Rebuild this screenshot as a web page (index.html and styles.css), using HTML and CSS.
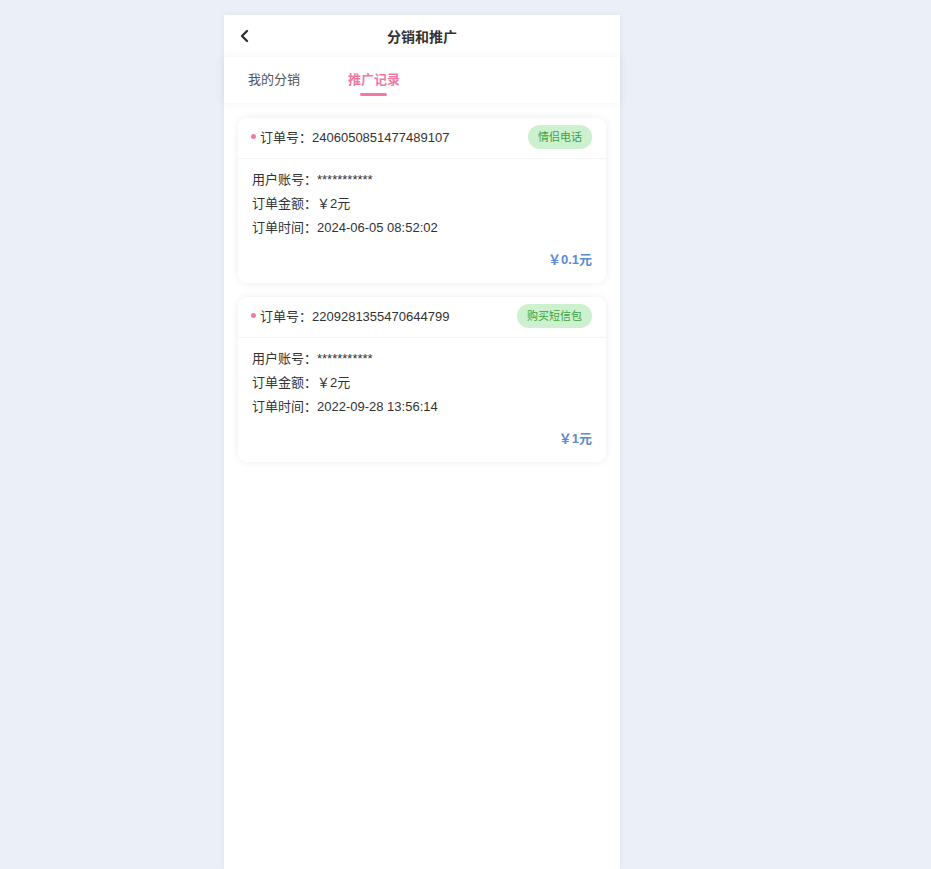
FILE: index.html
```html
<!DOCTYPE html>
<html lang="zh-CN">
<head>
    <meta charset="UTF-8">
    <meta name="viewport" content="width=device-width, initial-scale=1.0">
    <title>分销和推广</title>
    <link rel="stylesheet" href="styles.css">
</head>
<body>
    <div class="phone">
        <header class="topbar">
            <span class="back">
                <svg width="12" height="14" viewBox="0 0 12 14"><path d="M8 2 L3 7 L8 12" fill="none" stroke="#333" stroke-width="2.4" stroke-linecap="round" stroke-linejoin="round"/></svg>
            </span>
            <h1>分销和推广</h1>
        </header>

        <nav class="tabs">
            <div class="tab">我的分销</div>
            <div class="tab active">推广记录</div>
        </nav>

        <main class="list">
            <!-- 订单 1 -->
            <div class="card">
                <div class="card-head">
                    <span class="dot"></span>
                    <span class="order-no">订单号：2406050851477489107</span>
                    <span class="badge">情侣电话</span>
                </div>
                <div class="card-body">
                    <p>用户账号：***********</p>
                    <p>订单金额：￥2元</p>
                    <p>订单时间：2024-06-05 08:52:02</p>
                    <div class="reward">￥0.1元</div>
                </div>
            </div>

            <!-- 订单 2 -->
            <div class="card">
                <div class="card-head">
                    <span class="dot"></span>
                    <span class="order-no">订单号：2209281355470644799</span>
                    <span class="badge">购买短信包</span>
                </div>
                <div class="card-body">
                    <p>用户账号：***********</p>
                    <p>订单金额：￥2元</p>
                    <p>订单时间：2022-09-28 13:56:14</p>
                    <div class="reward">￥1元</div>
                </div>
            </div>
        </main>
    </div>
</body>
</html>
```

FILE: styles.css
```css
body {
    margin: 0;
    padding: 0;
    background-color: #eaeff8;
    font-family: "Liberation Sans", "Noto Sans CJK SC", sans-serif;
    color: #333;
}
.phone {
    width: 396px;
    min-height: 854px;
    margin: 15px 0 0 224px;
    background: #fff;
    box-shadow: 0 0 6px rgba(0, 0, 0, 0.06);
}
.topbar {
    position: relative;
    height: 42px;
    display: flex;
    align-items: center;
    justify-content: center;
}
.topbar h1 {
    margin: 0;
    font-size: 14px;
    font-weight: bold;
    color: #333;
}
.back {
    position: absolute;
    left: 15px;
    top: 14px;
    display: flex;
}
.tabs {
    height: 46px;
    display: flex;
    align-items: center;
    padding-left: 24px;
    gap: 48px;
    box-shadow: 0 0 10px rgba(0, 0, 0, 0.06);
    position: relative;
}
.tab {
    position: relative;
    font-size: 13px;
    color: #555;
    line-height: 18px;
}
.tab.active {
    color: #ef7aa6;
    font-weight: bold;
}
.tab.active::after {
    content: "";
    position: absolute;
    left: 12px;
    bottom: -7px;
    width: 27px;
    height: 3px;
    border-radius: 2px;
    background: #ef7aa6;
}
.list {
    padding: 15px 14px;
    display: flex;
    flex-direction: column;
    gap: 14px;
}
.card {
    border-radius: 9px;
    background: #fff;
    box-shadow: 0 0 8px rgba(0, 0, 0, 0.08);
}
.card-head {
    height: 40px;
    display: flex;
    align-items: center;
    padding: 0 14px 0 13px;
    border-bottom: 1px solid #f3f3f3;
    font-size: 13px;
}
.dot {
    width: 5px;
    height: 5px;
    border-radius: 50%;
    background: #ef7aa6;
    margin: 0 4px 4px 0;
}
.order-no {
    flex: 1;
    margin-bottom: 4px;
}
.badge {
    height: 24px;
    line-height: 24px;
    padding: 0 10px;
    margin-top: -2px;
    border-radius: 12px;
    background: #cdf0cf;
    color: #3aa43a;
    font-size: 11px;
}
.card-body {
    padding: 9px 14px 14px;
    font-size: 13px;
}
.card-body p {
    margin: 0;
    line-height: 24px;
}
.reward {
    text-align: right;
    margin-top: 11px;
    line-height: 18px;
    font-weight: bold;
    color: #5b8bd0;
}
```
